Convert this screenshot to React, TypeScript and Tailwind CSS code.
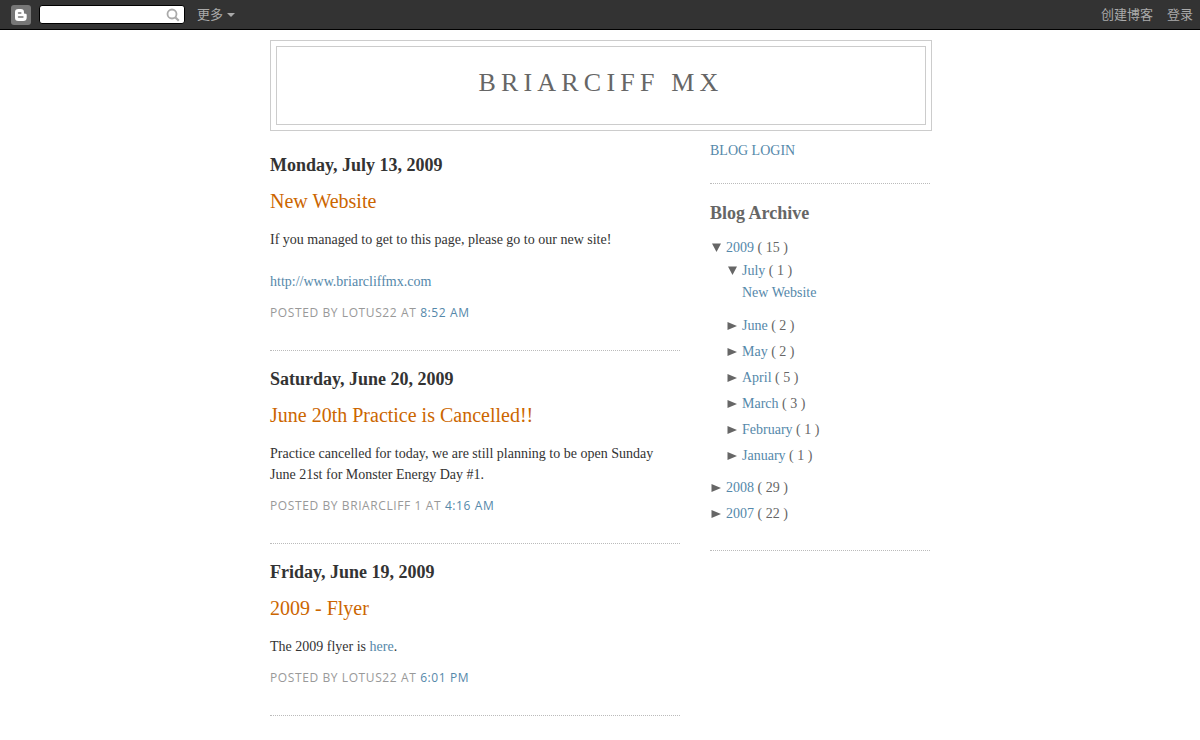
import { useState } from 'react'
import type { ReactNode } from 'react'

interface Post {
  date: string
  title: string
  body: ReactNode
  author: string
  time: string
}

const linkClass = 'text-[#5588aa] hover:underline'

const posts: Post[] = [
  {
    date: 'Monday, July 13, 2009',
    title: 'New Website',
    body: (
      <>
        If you managed to get to this page, please go to our new site!
        <br />
        <br />
        <a href="#site" className={linkClass}>http://www.briarcliffmx.com</a>
      </>
    ),
    author: 'Lotus22',
    time: '8:52 AM',
  },
  {
    date: 'Saturday, June 20, 2009',
    title: 'June 20th Practice is Cancelled!!',
    body: 'Practice cancelled for today, we are still planning to be open Sunday June 21st for Monster Energy Day #1.',
    author: 'Briarcliff 1',
    time: '4:16 AM',
  },
  {
    date: 'Friday, June 19, 2009',
    title: '2009 - Flyer',
    body: (
      <>
        The 2009 flyer is <a href="#flyer" className={linkClass}>here</a>.
      </>
    ),
    author: 'Lotus22',
    time: '6:01 PM',
  },
]

const months = [
  { name: 'June', count: 2 },
  { name: 'May', count: 2 },
  { name: 'April', count: 5 },
  { name: 'March', count: 3 },
  { name: 'February', count: 1 },
  { name: 'January', count: 1 },
]

const olderYears = [
  { name: '2008', count: 29 },
  { name: '2007', count: 22 },
]

function Navbar() {
  const [query, setQuery] = useState('')

  return (
    <nav className="flex h-[30px] items-center border-b border-black bg-[#333] pl-[11px] pr-[7px] font-['Liberation_Sans','Noto_Sans_CJK_SC',sans-serif] text-[13px] text-[#aaa]">
      <a href="#blogger" aria-label="Blogger" className="mr-2">
        <svg width="20" height="20" viewBox="0 0 20 20" className="block">
          <rect width="20" height="20" rx="3" fill="#777" />
          <path
            fill="#fff"
            fillRule="evenodd"
            d="M7.3 4h2.4a3.3 3.3 0 0 1 3.3 3.3v.7c0 .5.3.8.8.8h.7c.7 0 1.2.5 1.2 1.200v2.500a3.500 3.500 0 0 1-3.500 3.500h-4.900A3.300 3.300 0 0 1 4 12.700V7.300A3.300 3.300 0 0 1 7.300 4zm.3 3.200a.8.8 0 0 0 0 1.600h2.200a.8.8 0 0 0 0-1.600zm0 4a.8.8 0 0 0 0 1.600h4.300a.8.8 0 0 0 0-1.600z"
          />
        </svg>
      </a>
      <form
        role="search"
        onSubmit={(e) => e.preventDefault()}
        className="flex h-[19px] w-[146px] items-center rounded-[3px] border border-black bg-white"
      >
        <input
          type="text"
          aria-label="搜索"
          value={query}
          onChange={(e) => setQuery(e.target.value)}
          className="h-full min-w-0 flex-1 bg-transparent px-1 text-xs text-[#333] outline-none"
        />
        <button type="submit" aria-label="搜索" className="mr-1">
          <svg width="14" height="14" viewBox="0 0 14 14" fill="none" stroke="#aaa" className="block">
            <circle cx="6" cy="6" r="4.500" strokeWidth="1.800" />
            <path d="M9.200 9.200l3.600 3.600" strokeWidth="2.200" />
          </svg>
        </button>
      </form>
      <button type="button" className="ml-3 flex items-center gap-1">
        更多
        <svg width="8" height="4" viewBox="0 0 8 4" fill="#aaa">
          <path d="M0 0h8L4 4z" />
        </svg>
      </button>
      <div className="ml-auto flex gap-3.5">
        <a href="#create">创建博客</a>
        <a href="#login">登录</a>
      </div>
    </nav>
  )
}

function DateHeader({ children }: { children: ReactNode }) {
  return <h2 className="mb-3.5 text-lg leading-5 font-bold text-[#333]">{children}</h2>
}

function PostEntry({ post }: { post: Post }) {
  return (
    <article className="border-b border-dotted border-[#bbb] pt-[18px] pb-[27px]">
      <DateHeader>{post.date}</DateHeader>
      <h3 className="text-xl leading-6 text-[#cc6600]">
        <a href="#post">{post.title}</a>
      </h3>
      <div className="mt-4 text-sm leading-[21px] text-[#333]">{post.body}</div>
      <p className="mt-[11px] font-['Open_Sans',sans-serif] text-xs leading-5 tracking-wider text-[#999] uppercase">
        Posted by {post.author} at <a href="#permalink" className={linkClass}>{post.time}</a>
      </p>
    </article>
  )
}

function Toggle({ open = false }: { open?: boolean }) {
  return (
    <button type="button" aria-label={open ? 'Collapse' : 'Expand'} className="w-4 shrink-0">
      <svg width="12" height="10" viewBox="0 0 12 10" fill="#666" className="block">
        <path d={open ? 'M2 0.500h9L6.500 9z' : 'M1.500 1v8L11 5z'} />
      </svg>
    </button>
  )
}

function ArchiveRow({ name, count, open }: { name: string; count: number; open?: boolean }) {
  return (
    <div className="flex items-center">
      <Toggle open={open} />
      <span>
        <a href="#archive" className={linkClass}>{name}</a> ( {count} )
      </span>
    </div>
  )
}

function Sidebar() {
  return (
    <aside className="w-[220px] shrink-0 text-sm leading-5 text-[#666]">
      <div className="border-b border-dotted border-[#bbb] pt-2.5 pb-[22px]">
        <a href="#blog-login" className={linkClass}>BLOG LOGIN</a>
      </div>
      <section className="border-b border-dotted border-[#bbb] pt-[19px] pb-[26px]">
        <h2 className="text-lg leading-5 font-bold">Blog Archive</h2>
        <ul className="mt-[15px]">
          <li>
            <ArchiveRow name="2009" count={15} open />
            <ul className="mt-[3px] pb-1.5 pl-4">
              <li>
                <ArchiveRow name="July" count={1} open />
                <ul className="mt-0.5 mb-[13px] pl-4">
                  <li><a href="#new-website" className={linkClass}>New Website</a></li>
                </ul>
              </li>
              {months.map((month) => (
                <li key={month.name} className="mt-1.5">
                  <ArchiveRow name={month.name} count={month.count} />
                </li>
              ))}
            </ul>
          </li>
          {olderYears.map((year) => (
            <li key={year.name} className="mt-1.5">
              <ArchiveRow name={year.name} count={year.count} />
            </li>
          ))}
        </ul>
      </section>
    </aside>
  )
}

export default function App() {
  return (
    <div className="h-screen overflow-hidden bg-white font-['Liberation_Serif',serif]">
      <Navbar />
      <div className="mx-auto mt-2.5 max-w-[660px]">
        <header className="-mr-0.5 border border-[#ccc] p-[5px]">
          <div className="border border-[#ccc] pt-[18px] pb-[23px] text-center">
            <h1 className="text-[26px] leading-9 tracking-[0.2em] text-[#666] uppercase">Briarciff MX</h1>
          </div>
        </header>
        <div className="flex justify-between">
          <main className="w-[410px] pt-1.5">
            {posts.map((post) => (
              <PostEntry key={post.date} post={post} />
            ))}
            <div className="pt-[22px]">
              <DateHeader>Monday, May 25, 2009</DateHeader>
            </div>
          </main>
          <Sidebar />
        </div>
      </div>
    </div>
  )
}
